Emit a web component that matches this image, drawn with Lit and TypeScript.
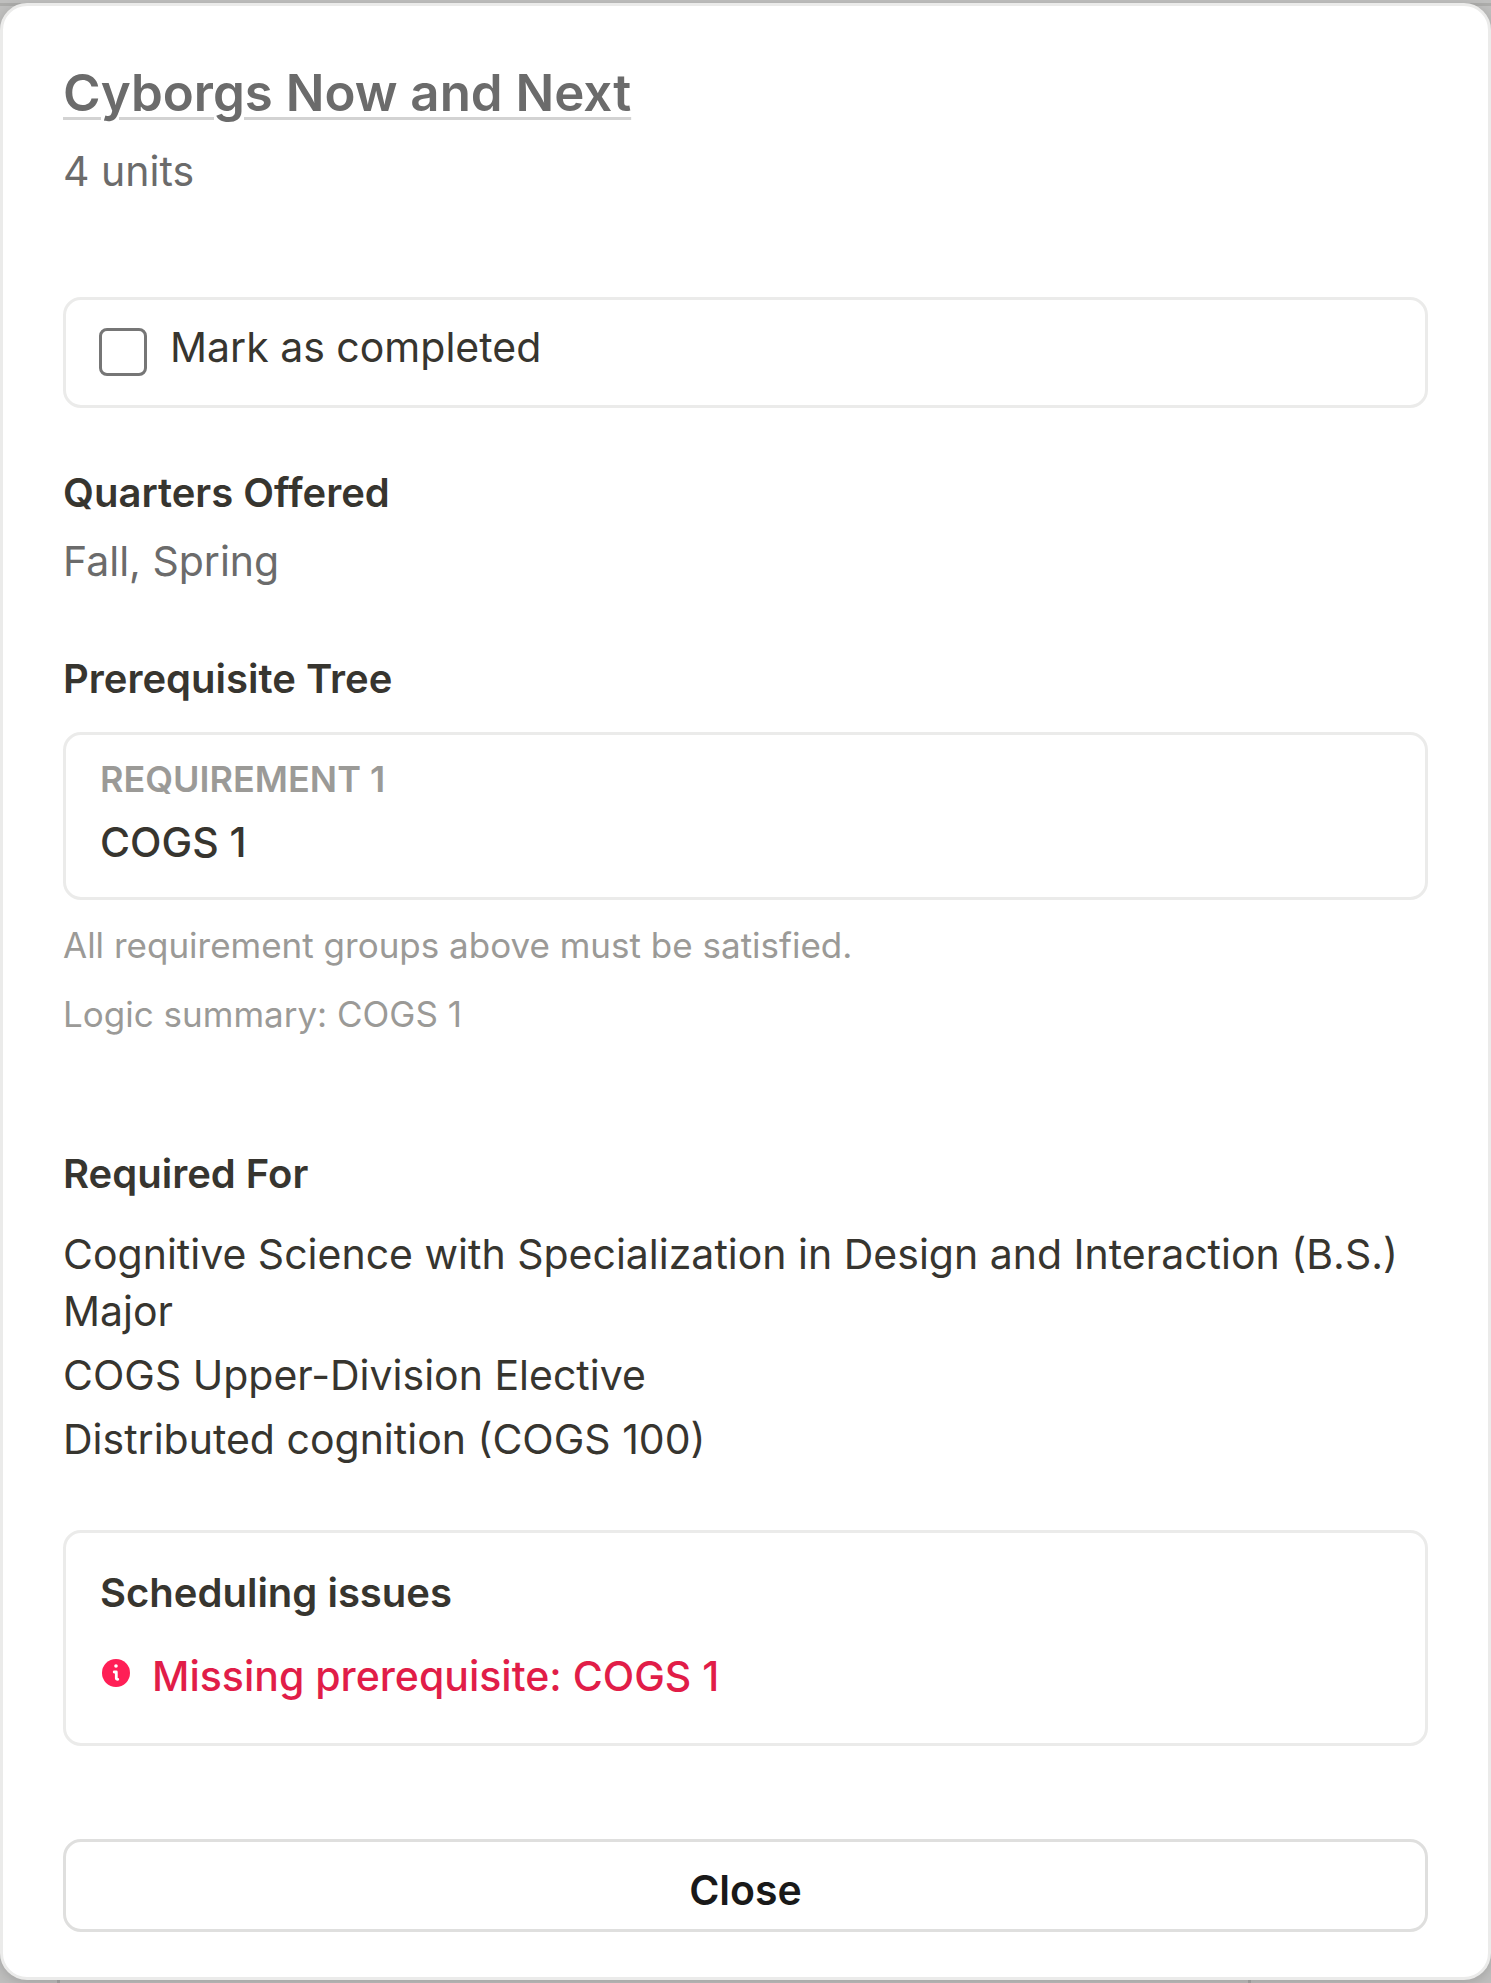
import { LitElement, html, css } from "lit";
import { customElement, state } from "lit/decorators.js";

interface Course {
  title: string;
  units: string;
  quarters: string;
  requirements: string[];
  logic: string;
  requiredFor: string[];
  issues: string[];
}

const course: Course = {
  title: "Cyborgs Now and Next",
  units: "4 units",
  quarters: "Fall, Spring",
  requirements: ["COGS 1"],
  logic: "COGS 1",
  requiredFor: [
    "Cognitive Science with Specialization in Design and Interaction (B.S.) Major",
    "COGS Upper-Division Elective",
    "Distributed cognition (COGS 100)",
  ],
  issues: ["Missing prerequisite: COGS 1"],
};

@customElement("app-root")
export class AppRoot extends LitElement {
  @state() private completed = false;

  static styles = css`
    :host {
      display: flex;
      box-sizing: border-box;
      min-height: 100vh;
      padding: 3px 0;
      /* Dimmed page behind the dialog, with the edges of its columns. */
      background:
        linear-gradient(#a8a8a7, #a8a8a7) 57px 100% / 3px 24px no-repeat,
        linear-gradient(#a8a8a7, #a8a8a7) calc(100% - 240px) 100% / 3px 24px no-repeat,
        linear-gradient(#acacaa, #acacaa) 0 3px / 100% 3px no-repeat,
        #bfbfbe;
      color: #37352f;
      font-family: Inter, "Liberation Sans", sans-serif;
      font-size: 41px;
      line-height: 57px;
    }
    * {
      box-sizing: border-box;
    }
    h1,
    h2,
    p,
    ul {
      margin: 0;
      padding: 0;
    }
    ul {
      list-style: none;
    }
    .card {
      flex: 1;
      display: flex;
      flex-direction: column;
      padding: 54px 60px 44px;
      border: 3px solid #ebebea;
      border-radius: 27px;
      background: #fff;
      box-shadow: 0 3px 12px rgba(0, 0, 0, 0.15);
    }
    .title {
      font-size: 51px;
      line-height: 66px;
      font-weight: 600;
    }
    .title a {
      color: #6b6b6b;
      text-decoration: underline 3px #d3d3d3;
      text-underline-offset: 6px;
    }
    .muted {
      color: #6b6b6b;
    }
    .units {
      margin-top: 17px;
    }
    .box {
      border: 3px solid #ebebea;
      border-radius: 18px;
    }
    .complete {
      display: flex;
      align-items: flex-end;
      gap: 23px;
      margin-top: 97px;
      padding: 19px 33px 29px;
    }
    .check {
      appearance: none;
      flex: none;
      width: 48px;
      height: 48px;
      margin: 0;
      border: 3px solid #767676;
      border-radius: 8px;
      background: #fff;
    }
    .check:checked {
      border-color: #37352f;
      background: #37352f;
    }
    .heading {
      font-size: 40px;
      line-height: 57px;
      font-weight: 600;
    }
    .quarters {
      display: grid;
      gap: 12px;
      margin-top: 56px;
    }
    .prereq {
      margin-top: 60px;
    }
    .requirement {
      margin-top: 25px;
      padding: 20px 34px 26px;
    }
    .eyebrow {
      margin-bottom: 11px;
      color: #9b9a97;
      font-size: 36px;
      line-height: 48px;
      font-weight: 600;
      text-transform: uppercase;
    }
    .medium {
      font-weight: 500;
    }
    .note {
      margin-top: 21px;
      color: #9b9a97;
      font-size: 35px;
      line-height: 48px;
    }
    .required {
      margin-top: 107px;
    }
    .list {
      display: grid;
      gap: 7px;
      margin-top: 24px;
    }
    .issues {
      display: grid;
      gap: 27px;
      margin-top: 62px;
      padding: 31px 34px 38px;
    }
    .issue {
      display: flex;
      align-items: flex-start;
      gap: 21px;
      padding-left: 1px;
      color: #e11d48;
      font-weight: 500;
    }
    .icon {
      flex: none;
      width: 30px;
      height: 30px;
      margin-top: 10px;
    }
    .close {
      margin-top: 93px;
      padding: 20px 15px 10px;
      border: 3px solid #dfdfde;
      border-radius: 18px;
      background: #fff;
      color: #191919;
      font: inherit;
      font-weight: 600;
    }
  `;

  private toggle(e: Event) {
    this.completed = (e.target as HTMLInputElement).checked;
  }

  render() {
    return html`
      <main class="card">
        <h1 class="title"><a href="#course">${course.title}</a></h1>
        <p class="units muted">${course.units}</p>

        <label class="box complete">
          <input class="check" type="checkbox" .checked=${this.completed} @change=${this.toggle} />
          <span>Mark as completed</span>
        </label>

        <section class="quarters">
          <h2 class="heading">Quarters Offered</h2>
          <p class="muted">${course.quarters}</p>
        </section>

        <section class="prereq">
          <h2 class="heading">Prerequisite Tree</h2>
          ${course.requirements.map(
            (name, i) => html`
              <div class="box requirement">
                <p class="eyebrow">Requirement ${i + 1}</p>
                <p class="medium">${name}</p>
              </div>
            `
          )}
          <p class="note">All requirement groups above must be satisfied.</p>
          <p class="note">Logic summary: ${course.logic}</p>
        </section>

        <section class="required">
          <h2 class="heading">Required For</h2>
          <ul class="list">
            ${course.requiredFor.map((item) => html`<li>${item}</li>`)}
          </ul>
        </section>

        <section class="box issues">
          <h2 class="heading">Scheduling issues</h2>
          ${course.issues.map(
            (text) => html`
              <p class="issue">
                <svg class="icon" viewBox="0 0 30 30" aria-hidden="true">
                  <circle cx="15" cy="15" r="14" fill="#ff1f56" />
                  <circle cx="15" cy="8" r="1.8" fill="#fff" />
                  <path
                    d="M13.2 14H15.3V20.3Q15.3 21.3 16.8 21.3"
                    fill="none"
                    stroke="#fff"
                    stroke-width="2.8"
                    stroke-linecap="round"
                    stroke-linejoin="round"
                  />
                </svg>
                <span>${text}</span>
              </p>
            `
          )}
        </section>

        <button class="close" type="button">Close</button>
      </main>
    `;
  }
}
